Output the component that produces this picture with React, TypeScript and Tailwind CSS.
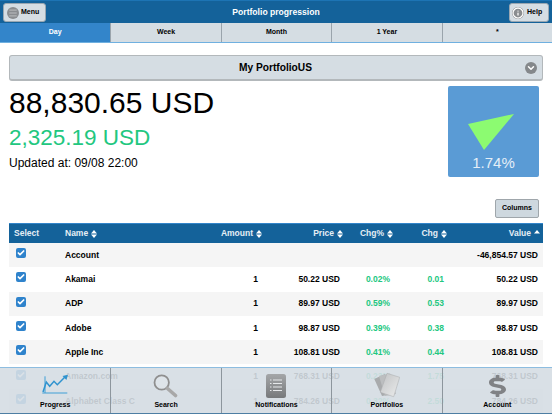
import React from 'react';
import { Check, ChevronDown, Menu, Info } from 'lucide-react';
import { FaDollarSign } from 'react-icons/fa';

const tabs = ['Day', 'Week', 'Month', '1 Year', '*'];

const rows = [
  { name: 'Account', amount: '', price: '', pct: '', chg: '', value: '-46,854.57 USD' },
  { name: 'Akamai', amount: '1', price: '50.22 USD', pct: '0.02%', chg: '0.01', value: '50.22 USD' },
  { name: 'ADP', amount: '1', price: '89.97 USD', pct: '0.59%', chg: '0.53', value: '89.97 USD' },
  { name: 'Adobe', amount: '1', price: '98.87 USD', pct: '0.39%', chg: '0.38', value: '98.87 USD' },
  { name: 'Apple Inc', amount: '1', price: '108.81 USD', pct: '0.41%', chg: '0.44', value: '108.81 USD' },
  { name: 'Amazon.com', amount: '1', price: '768.31 USD', pct: '0.23%', chg: '1.75', value: '768.31 USD' },
  { name: 'Alphabet Class C', amount: '1', price: '784.26 USD', pct: '0.32%', chg: '2.50', value: '784.26 USD' },
];

const columns = 'grid grid-cols-[56px_140px_57px_81px_50px_54px_96px]';

const SortIcon = ({ up = true, down = true }: { up?: boolean; down?: boolean }) => (
  <svg viewBox="0 0 6 8" className="ml-[3px] h-[8px] w-[6px] fill-white">
    {up && <path d="M3 0 L6 3.4 H0 Z" />}
    {down && <path d="M3 8 L6 4.6 H0 Z" />}
  </svg>
);

const CheckBox = () => (
  <span className="flex h-[10px] w-[10px] items-center justify-center rounded-[2px] bg-[#2f83cc]">
    <Check className="h-[8px] w-[8px] text-white" strokeWidth={5} />
  </span>
);

const HeaderCell = ({ label, up, down, className }: { label: string; up?: boolean; down?: boolean; className: string }) => (
  <div className={`flex items-center ${className}`}>
    {label}
    <SortIcon up={up} down={down} />
  </div>
);

const ProgressIcon = () => (
  <svg viewBox="0 0 28 28" className="h-[28px] w-[28px]">
    <path d="M1.3 23 H26.3 M4 6.3 V23" stroke="#3f9fd6" strokeWidth="1" fill="none" />
    <path d="M2 22 L5.3 12 L8.7 16.3 L13 11.3 L16.3 14.7 L24.7 6.3" stroke="#2f93cf" strokeWidth="1.5" fill="none" />
    <path d="M21.5 6 L27 4.8 L25.4 10 Z" fill="#2f93cf" />
  </svg>
);

const SearchIcon = () => (
  <svg viewBox="0 0 26 28" className="h-[28px] w-[26px]">
    <circle cx="8.7" cy="12.5" r="7.2" fill="#e4e8eb" fillOpacity="0.5" stroke="#8f8f8f" strokeWidth="1.8" />
    <path d="M14.5 18.5 L22.5 25.5" stroke="#a8a8a8" strokeWidth="3.6" strokeLinecap="round" />
  </svg>
);

const NotesIcon = () => (
  <svg viewBox="0 0 20 28" className="h-[28px] w-[20px]">
    <defs>
      <linearGradient id="notes-fill" x1="0" y1="0" x2="0" y2="1">
        <stop offset="0" stopColor="#a4a6a8" />
        <stop offset="1" stopColor="#77797b" />
      </linearGradient>
    </defs>
    <rect x="0" y="4" width="20" height="24" rx="2.5" fill="url(#notes-fill)" />
    <path d="M7 10 H16 M7 13.5 H16 M7 17 H16 M7 20.5 H16" stroke="#e6e8ea" strokeWidth="1" />
    <path d="M4 10 H5.5 M4 13.5 H5.5 M4 17 H5.5 M4 20.5 H5.5" stroke="#e6e8ea" strokeWidth="1" />
  </svg>
);

const CardsIcon = () => (
  <svg viewBox="0 0 26 28" className="h-[28px] w-[26px]">
    <defs>
      <linearGradient id="card-fill" x1="0" y1="0" x2="1" y2="1">
        <stop offset="0" stopColor="#bfc1c3" />
        <stop offset="1" stopColor="#eceded" />
      </linearGradient>
    </defs>
    <path d="M0.3 9 L11 4 L18 24 L8 26 Z" fill="#a9abad" />
    <path d="M5 6 L16 3.5 L22 24 L11 26 Z" fill="#bcbec0" />
    <path d="M13 3.3 L25.7 7.3 L19.7 26.7 L6.3 22.3 Z" fill="url(#card-fill)" stroke="#a9abad" strokeWidth="0.5" />
  </svg>
);

const App = () => {
  return (
    <div className="relative h-[414px] w-[552px] overflow-hidden bg-white font-['Liberation_Sans',Arial,sans-serif] text-black">
      <header className="flex h-[23px] items-center justify-between border-t border-[#1d74b4] bg-[#14629a] pl-[3px] pr-[3px] pt-[1px]">
        <button className="flex h-[19px] w-[43px] items-center gap-[2px] rounded-[3px] border border-[#9aa7b2] bg-[#d5dde3] pl-[3px] text-[7px] font-bold">
          <span className="flex h-[12px] w-[12px] items-center justify-center rounded-full bg-[#8a8d90]">
            <Menu className="h-[10px] w-[10px] text-[#c6c8ca]" strokeWidth={2} />
          </span>
          Menu
        </button>
        <div className="mr-[3px] text-[8.6px] font-bold text-white">Portfolio progression</div>
        <button className="flex h-[19px] w-[40px] items-center gap-[3px] rounded-[3px] border border-[#9aa7b2] bg-[#d5dde3] pl-[2px] text-[7px] font-bold">
          <Info className="h-[12px] w-[12px] rounded-full bg-[#8a8d90] text-white" strokeWidth={2.5} />
          Help
        </button>
      </header>

      <nav className="grid h-[20px] grid-cols-5 border-b border-[#6fb0e0]">
        {tabs.map((tab, i) => (
          <div
            key={tab}
            className={`flex items-center justify-center text-[7px] font-bold ${
              i === 0 ? 'bg-[#3385ca] text-white' : 'border-l border-[#9aa4ac] bg-[#d5dde3]'
            }`}
          >
            {tab}
          </div>
        ))}
      </nav>

      <main className="px-[9px]">
        <div className="mt-[12px] flex h-[26px] items-center rounded-[3px] border border-b-2 border-[#b3b8bb] bg-[#d5dde3] pl-[8px] pr-[5px]">
          <div className="flex-1 pl-[8px] text-center text-[10.2px] font-bold">My PortfolioUS</div>
          <span className="flex h-[12px] w-[12px] items-center justify-center rounded-full bg-[#85888b]">
            <ChevronDown className="h-[10px] w-[10px] text-white" strokeWidth={3.5} />
          </span>
        </div>

        <div className="flex justify-between pr-[4px]">
          <div>
            <div className="mt-[3px] text-[30px] leading-[38px]">88,830.65 USD</div>
            <div className="mt-[2px] text-[22.5px] leading-[28px] text-[#22c77f]">2,325.19 USD</div>
            <div className="mt-[4px] text-[12px] leading-[14px]">Updated at: 09/08 22:00</div>
          </div>
          <div className="mt-[5px] flex h-[91px] w-[91px] flex-col items-center rounded-[2px] bg-[#5a9bd5]">
            <svg viewBox="0 0 46 36" className="ml-[-5px] mt-[28px] h-[36px] w-[46px]">
              <path d="M0 10 L46 0 L16 36 Z" fill="#8cfb71" />
            </svg>
            <div className="mt-[4px] text-[15px] leading-[17px] text-[#e4eef7]">1.74%</div>
          </div>
        </div>

        <div className="mt-[22px] flex justify-end pr-[4px]">
          <button className="h-[19px] w-[44px] rounded-[2px] border border-[#9fa6ab] bg-[#ced8df] text-[7px] font-bold">Columns</button>
        </div>

        <div className={`${columns} mt-[5px] h-[20px] items-center border-t border-[#3385ca] bg-[#14629a] text-[8.5px] font-bold text-[#e6eef5]`}>
          <div className="pl-[5px]">Select</div>
          <HeaderCell label="Name" className="" />
          <HeaderCell label="Amount" className="justify-end" />
          <HeaderCell label="Price" className="justify-end" />
          <HeaderCell label="Chg%" className="justify-end" />
          <HeaderCell label="Chg" className="justify-end" />
          <HeaderCell label="Value" down={false} className="justify-end pr-[3px]" />
        </div>

        {rows.map((row, i) => (
          <div
            key={row.name}
            className={`${columns} h-[24.3px] items-center text-[8.5px] font-bold ${i % 2 === 0 ? 'bg-[#f5f5f5]' : 'bg-white'}`}
          >
            <div className="pb-[4px] pl-[7px]">
              <CheckBox />
            </div>
            <div>{row.name}</div>
            <div className="pr-[4px] text-right">{row.amount}</div>
            <div className="pr-[3px] text-right">{row.price}</div>
            <div className="pr-[3px] text-right text-[#22c77f]">{row.pct}</div>
            <div className="pr-[3px] text-right text-[#22c77f]">{row.chg}</div>
            <div className="pr-[5px] text-right">{row.value}</div>
          </div>
        ))}
      </main>

      <footer className="absolute bottom-0 left-0 grid h-[47px] w-[552px] grid-cols-5 border-b border-t border-b-[#4d7ea3] border-t-[#8dbde0] bg-[#d5dde3]/90">
        {[
          { label: 'Progress', icon: <ProgressIcon /> },
          { label: 'Search', icon: <SearchIcon /> },
          { label: 'Notifications', icon: <NotesIcon /> },
          { label: 'Portfolios', icon: <CardsIcon /> },
          { label: 'Account', icon: <FaDollarSign preserveAspectRatio="none" className="mt-[3px] h-[22px] w-[17px] text-[#808285]" /> },
        ].map((item, i) => (
          <div key={item.label} className={`flex flex-col items-center ${i > 0 ? 'border-l border-[#8d969d]' : ''}`}>
            <div className="flex h-[32px] items-center">{item.icon}</div>
            <div className="text-[7px] font-bold leading-[10px]">{item.label}</div>
          </div>
        ))}
      </footer>
    </div>
  );
};

export default App;
